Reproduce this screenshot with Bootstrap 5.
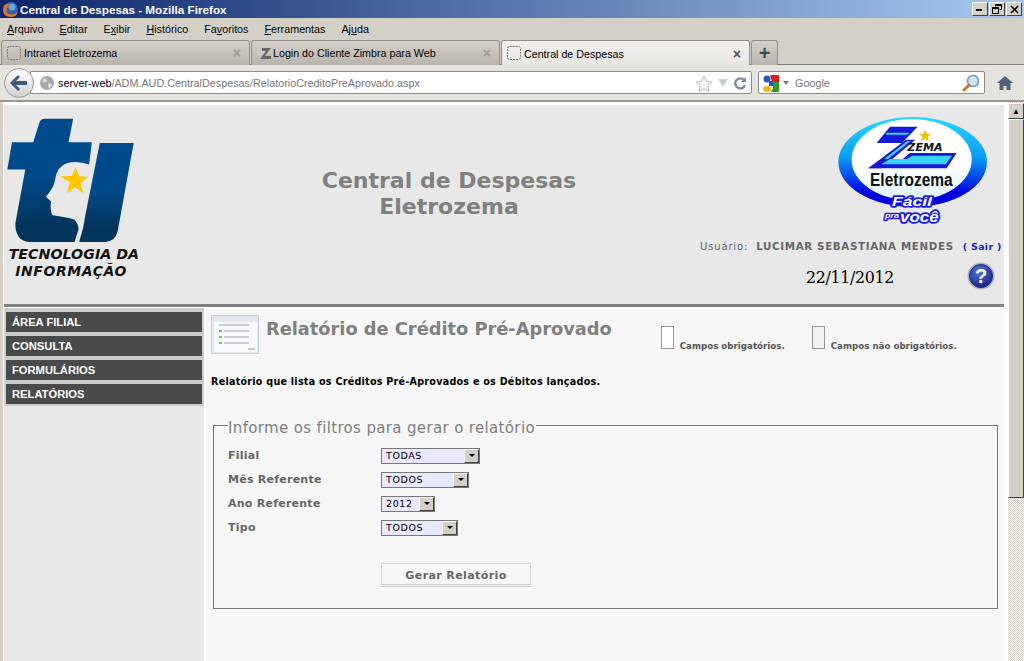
<!DOCTYPE html>
<html lang="pt-BR">

<head>
    <meta charset="UTF-8">
    <title>Central de Despesas - Mozilla Firefox</title>
    <link href="https://cdn.jsdelivr.net/npm/bootstrap@5.3.0/dist/css/bootstrap.min.css" rel="stylesheet">
    <style>
        html, body { height: 661px; overflow: hidden; }
        body { background: #d4d0c8; font-family: "Noto Sans", "Liberation Sans", sans-serif; font-size: 11px; color: #000; line-height: 1.2; }

        /* janela do navegador */
        .win-title { height: 18px; background: linear-gradient(90deg, #0a246a, #a6caf0); color: #fff; font: bold 11.7px "Liberation Sans", sans-serif; padding-left: 2px; }
        .win-btn { width: 16px; height: 14px; background: #d4d0c8; border: 1px solid; border-color: #fff #404040 #404040 #fff; }
        .win-btns { padding-right: 2px; gap: 1px; }
        .menu-bar { height: 22px; padding-left: 7px; gap: 16px; font: 10.75px "Liberation Sans", sans-serif; }
        .tab-row { height: 25px; padding-left: 1px; border-bottom: 1px solid #808080; gap: 1px; }
        .ff-tab { width: 249px; height: 25px; background: linear-gradient(#d4d0c8, #b9b5ad); border: 1px solid #8f8d88; border-bottom: 0; border-radius: 3px 3px 0 0; padding: 0 8px 0 5px; font: 10.7px "Liberation Sans", sans-serif; gap: 2px; }
        .ff-tab.on { background: linear-gradient(#f2f1ee, #e8e6e1); height: 26px; margin-bottom: -1px; }
        .tab-x { margin-left: auto; color: #9a968f; font-size: 14px; font-weight: bold; }
        .ff-tab.on .tab-x { color: #555; }
        .tab-plus { width: 27px; height: 25px; background: linear-gradient(#d4d0c8, #b9b5ad); border: 1px solid #8f8d88; border-bottom: 0; border-radius: 3px 3px 0 0; color: #3c4a5c; font: bold 20px "Liberation Sans", sans-serif; }
        .nav-row { height: 35px; background: #e6e4df; position: relative; padding: 6px 0 3px 30px; gap: 6px; }
        .back-btn { position: absolute; left: 4px; top: 3px; width: 30px; height: 30px; border-radius: 50%; background: linear-gradient(#fff, #cfd0d0); border: 1px solid #9a9a96; }
        .url-box { width: 722px; height: 23px; background: #fff; border: 1px solid #8f8d88; border-radius: 0 2px 2px 0; padding: 1px 0 0 9px; font: 10.8px "Liberation Sans", sans-serif; color: #777; }
        .url-box b { font-weight: normal; color: #000; }
        .search-box { width: 227px; height: 23px; background: #fff; border: 1px solid #8f8d88; border-radius: 2px; padding: 1px 4px 0; color: #777; font: 10.8px "Liberation Sans", sans-serif; }
        .home-ico { margin-left: 6px; }

        /* area da pagina */
        .page-frame { height: 561px; border-top: 2px solid #9a9894; padding-left: 3px; background: #d4d0c8; }
        .page-view { width: 1004px; height: 559px; background: #fff; flex: none; padding: 3px 3px 0 1px; }
        .scroll-col { width: 17px; flex: none; padding-top: 1px; border-left: 1px solid #fff; background: #d4d0c8 conic-gradient(#fff 25%, #d4d0c8 0 50%, #fff 0 75%, #d4d0c8 0) 0 0 / 2px 2px; }
        .scroll-arrow { height: 16px; background: #d4d0c8; border: 1px solid; border-color: #fff #404040 #404040 #fff; font-size: 8px; }
        .scroll-thumb { height: 379px; background: #d4d0c8; border: 1px solid; border-color: #fff #404040 #404040 #fff; }

        .top-head { height: 199px; background: #e8e8e8; position: relative; font-family: "DejaVu Sans", sans-serif; }
        .top-logo { width: 305px; padding: 11px 0 0 2px; }
        .top-title { width: 280px; margin-top: 63px; text-align: center; font-size: 22px; font-weight: bold; color: #808080; line-height: 26px; }
        .top-side { position: relative; margin-left: auto; width: 312px; }
        .zema-logo { display: block; margin: 12px 0 0 146px; }
        .user-line { position: absolute; left: 8px; top: 135px; white-space: nowrap; font-size: 10px; color: #666; letter-spacing: .85px; }
        .user-line b { margin-left: 4px; font-size: 10.3px; letter-spacing: .65px; }
        .user-line span { color: #2222bb; font-weight: bold; margin-left: 5px; font-size: 9.5px; letter-spacing: .3px; }
        .date-line { position: absolute; left: 114px; top: 163px; font: 15.800px "DejaVu Serif", serif; letter-spacing: -.3px; }
        .help-ico { position: absolute; left: 275px; top: 157px; }
        .head-sep { height: 3px; background: #808080; margin-bottom: 1px; }

        .page-body { height: 353px; }
        .side-col { width: 200px; flex: none; background: #e8e8e8; }
        .side-menu { background: #ccc; padding: 4px 2px 2px; gap: 4px; }
        .side-item { height: 20px; background: #4a4a4a; color: #fff; font: bold 11.2px "Liberation Sans", sans-serif; padding-left: 6px; }
        .main-col { flex: 1; background: #f7f7f7; margin-left: 2px; font-family: "DejaVu Sans", sans-serif; padding: 7px 6px 0 5px; }
        .rel-icon { width: 48px; height: 39px; flex: none; }
        .rel-title { font-size: 17.800px; font-weight: bold; color: #808080; margin-left: 7px; margin-top: 3px; white-space: nowrap; }
        .legend-a { margin: 11px 0 0 49px; }
        .legend-b { margin: 11px 0 0 27px; }
        .legend-box { width: 13px; height: 23px; border: 1px solid #999; background: #fff; flex: none; }
        .legend-b .legend-box { background: #f2f2f2; }
        .legend-txt { font-size: 8.700px; font-weight: bold; color: #555; margin: 0 0 -2px 6px; align-self: flex-end; white-space: nowrap; }
        .rel-desc { font-size: 9.6px; font-weight: bold; margin: 22px 0 0 0; letter-spacing: .25px; }
        .filter-set { border: 1px solid #777; margin: 27px 0 0 2px; padding: 7px 14px 0; width: 785px; height: 194px; }
        .filter-set legend { float: none; width: auto; font-size: 15px; color: #808080; margin: 0; padding: 5px 1px 0 0; line-height: 17px; letter-spacing: .35px; }
        .filter-row { height: 24px; font-size: 11px; font-weight: bold; color: #666; letter-spacing: .25px; }
        .filter-row label { width: 153px; flex: none; }
        .fake-sel { height: 16px; background: #e8e8ff; border: 1px solid; border-color: #808080 #d4d0c8 #d4d0c8 #808080; outline: 1px solid #777; outline-offset: -1px; font-size: 9.5px; font-weight: normal; color: #000; padding-left: 4px; letter-spacing: .6px; }
        .fake-sel i { margin-left: auto; width: 15px; height: 14px; background: #d4d0c8; border: 1px solid; border-color: #fff #404040 #404040 #fff; display: flex; align-items: center; justify-content: center; }
        .fake-sel i::after { content: ""; border: 3px solid transparent; border-top: 3px solid #000; border-bottom: 0; }
        .gerar-btn { width: 150px; height: 24px; margin: 23px 0 0 153px; background: #f7f7f7; border: 1px solid #d8d8d8; border-bottom: 3px double #ccc; color: #666; font-size: 11px; font-weight: bold; letter-spacing: .4px; border-radius: 0; padding: 4px 0 0; }
    </style>
</head>

<body>
    <div class="win-title d-flex align-items-center">
        <svg width="17" height="17" viewBox="0 0 17 17" style="margin-right:1px"><circle cx="9" cy="8" r="7" fill="#2f63ad"/><circle cx="10" cy="6" r="3.500" fill="#6fa4dc"/><path d="M3 3Q1 6 1 9q0 7 8 7 6 0 7-6-2 4-7 3.500Q4 13 4.500 8 5 5 8 3 5 2 4 4z" fill="#e8761c"/></svg>
        <span>Central de Despesas - Mozilla Firefox</span>
        <div class="win-btns d-flex ms-auto">
            <div class="win-btn d-flex align-items-end justify-content-center pb-1"><svg width="8" height="2"><rect width="6" height="2"/></svg></div>
            <div class="win-btn d-flex align-items-center justify-content-center"><svg width="10" height="10" viewBox="0 0 10 10" fill="none" stroke="#000"><path d="M3.500 2.500V.5h6v5h-2M.5 3.500h6v6h-6zM.5 4.500h6M3.500 1.500h6"/></svg></div>
            <div class="win-btn d-flex align-items-center justify-content-center"><svg width="9" height="9" viewBox="0 0 9 9" stroke="#000" stroke-width="1.600"><path d="M1 1l7 7M8 1L1 8"/></svg></div>
        </div>
    </div>

    <div class="menu-bar d-flex align-items-center">
        <span><u>A</u>rquivo</span><span><u>E</u>ditar</span><span>E<u>x</u>ibir</span><span><u>H</u>istórico</span><span>Fa<u>v</u>oritos</span><span><u>F</u>erramentas</span><span>Aj<u>u</u>da</span>
    </div>

    <div class="tab-row d-flex align-items-start">
        <div class="ff-tab d-flex align-items-center">
            <svg width="15" height="15" viewBox="0 0 15 15" fill="none" stroke="#777" stroke-dasharray="2 1"><rect x=".5" y=".5" width="13" height="13" rx="2"/></svg>
            <span>Intranet Eletrozema</span><span class="tab-x">×</span>
        </div>
        <div class="ff-tab d-flex align-items-center">
            <svg width="15" height="13" viewBox="0 0 15 13"><path d="M0 2h6l2 2-2 4H0z" fill="#ccc"/><path d="M5 1h9L8 9h6v3H3l6-8H5z" fill="#666"/></svg>
            <span style="margin-left:-1px">Login do Cliente Zimbra para Web</span><span class="tab-x">×</span>
        </div>
        <div class="ff-tab on d-flex align-items-center">
            <svg width="15" height="15" viewBox="0 0 15 15" fill="none" stroke="#777" stroke-dasharray="2 1"><rect x=".5" y=".5" width="13" height="13" rx="2"/></svg>
            <span>Central de Despesas</span><span class="tab-x">×</span>
        </div>
        <div class="tab-plus d-flex align-items-center justify-content-center">+</div>
    </div>

    <div class="nav-row d-flex align-items-start">
        <div class="back-btn d-flex align-items-center justify-content-center">
            <svg width="18" height="16" viewBox="0 0 18 16"><path d="M8 0l2 2-4 4h11v4H6l4 4-2 2-8-8z" fill="#3f5a78"/></svg>
        </div>
        <div class="url-box d-flex align-items-center">
            <svg width="14" height="14" viewBox="0 0 14 14"><circle cx="7" cy="7" r="7" fill="#a8a8a8"/><path d="M3 3c2-1 3 0 4 1S5 7 3 6zM8 8c2-1 4 0 4 1s-2 3-3 3-1-3-1-4z" fill="#ddd"/></svg>
            <span style="margin-left:4px"><b>server-web</b>/ADM.AUD.CentralDespesas/RelatorioCreditoPreAprovado.aspx</span>
            <div class="ms-auto d-flex align-items-center gap-1 pe-1">
                <svg width="18" height="17" viewBox="0 0 18 17"><path d="M9 1l2.500 5.500 5.500.6-4 3.800 1.100 5.600L9 13.700 3.900 16.500 5 10.900 1 7.100l5.500-.6z" fill="#f8f8f8" stroke="#bbb"/></svg>
                <svg width="12" height="8" viewBox="0 0 12 8"><path d="M1 0h10L6 8z" fill="#c4ccd4"/></svg>
                <svg width="14" height="14" viewBox="0 0 14 14" fill="none" stroke="#7b8a99" stroke-width="2.400"><path d="M12 9a5 5 0 1 1-1-5"/><path d="M13 1v5H8z" fill="#7b8a99" stroke="none"/></svg>
            </div>
        </div>
        <div class="search-box d-flex align-items-center">
            <svg width="16" height="17" viewBox="0 0 16 17"><path d="M0 0h16v17H0z" fill="#fff"/><circle cx="4" cy="4" r="3.500" fill="#2a55c8"/><path d="M6 6h4v5H6z" fill="#2a55c8"/><path d="M7 0h9v7H9z" fill="#d8201a"/><path d="M10 7h6v10H8l2-4z" fill="#2d9a2d"/><ellipse cx="4" cy="14" rx="4" ry="3" fill="#f0b418"/></svg>
            <svg width="6" height="4" viewBox="0 0 6 4" class="ms-1"><path d="M0 0h6L3 4z" fill="#777"/></svg>
            <span style="margin-left:6px">Google</span>
            <svg width="18" height="18" viewBox="0 0 18 18" class="ms-auto"><circle cx="11" cy="7" r="5.500" fill="#cfe6f8" stroke="#6f9dc4" stroke-width="1.600"/><path d="M7 11l-5 5" stroke="#c47a2a" stroke-width="3" stroke-linecap="round"/></svg>
        </div>
        <svg width="16" height="16" viewBox="0 0 16 16" class="home-ico mt-1"><path d="M8 1L0 8h2.500v7h4v-4h3v4h4V8H16z" fill="#4f6478"/></svg>
    </div>

    <div class="page-frame d-flex">
        <div class="page-view">
            <div class="top-head d-flex">
                <div class="top-logo">
                    <svg width="133" height="167" viewBox="20 50 400 500">
                        <defs><linearGradient id="tiBlue" x1="0" y1="0" x2="0" y2="1"><stop offset=".45" stop-color="#004a8c"/><stop offset=".85" stop-color="#03355c"/></linearGradient></defs>
                        <path fill="url(#tiBlue)" d="M120 70Q124 57 136 57H222L208 128H278L270 195Q235 182 205 190Q172 200 168 240Q166 262 140 292L155 305Q152 335 160 347Q200 352 225 360Q238 372 238 390L226 428H90Q48 425 48 372L78 210H24L38 128H102Z"/>
                        <path fill="url(#tiBlue)" d="M302 130H404L356 395Q348 428 318 428H240L252 385Q258 350 262 330Z"/>
                        <path fill="#ffc800" d="M229 202l11 28 28 2-24 18 9 31-25-18-25 18 9-32-29-19 35-1z"/>
                        <text x="28" y="478" textLength="392" lengthAdjust="spacingAndGlyphs" font-family="DejaVu Sans, sans-serif" font-size="42" font-weight="bold" font-style="italic" fill="#111">TECNOLOGIA DA</text>
                        <text x="48" y="530" textLength="334" font-family="DejaVu Sans, sans-serif" font-size="42" font-weight="bold" font-style="italic" fill="#111">INFORMAÇÃO</text>
                    </svg>
                </div>
                <div class="top-title">Central de Despesas<br>Eletrozema</div>
                <div class="top-side">
                    <svg class="zema-logo" width="150" height="108" viewBox="114 50 450 324">
                        <defs>
                            <linearGradient id="zRing" x1="0" y1="0" x2="0" y2="1"><stop offset="0" stop-color="#2ad8ff"/><stop offset=".45" stop-color="#0a9cf4"/><stop offset=".85" stop-color="#0000e0"/></linearGradient>
                            <linearGradient id="zIn" x1="0" y1="0" x2="0" y2="1"><stop offset=".55" stop-color="#fff"/><stop offset="1" stop-color="#dff3fa"/></linearGradient>
                        </defs>
                        <ellipse cx="338" cy="185" rx="223" ry="135" fill="url(#zRing)"/>
                        <ellipse cx="335" cy="178" rx="180" ry="122" fill="url(#zIn)"/>
                        <path d="M270 79H353L306 128H230z" fill="#1818d8"/>
                        <path d="M262 97H328L322 103H256z" fill="#36d4f4"/>
                        <path d="M318 118H346L244 204H205z" fill="#1818d8"/>
                        <path d="M322 122H332L238 196H226z" fill="#36d4f4"/>
                        <path d="M330 158H470L440 204H205L245 176H308z" fill="#1818d8"/>
                        <path d="M270 176H320L336 166H456L446 180L438 192H244z" fill="#36d4f4"/>
                        <text x="322" y="151" font-family="DejaVu Sans, sans-serif" font-size="30" font-weight="bold" font-style="italic" textLength="106" lengthAdjust="spacingAndGlyphs" fill="#111">ZEMA</text>
                        <path fill="#f0c010" d="M375 88l5 12 13 1-10 8 4 13-12-7-12 7 4-13-10-8 13-1z"/>
                        <text x="210" y="256" font-family="Liberation Sans, sans-serif" font-size="54" font-weight="bold" textLength="248" lengthAdjust="spacingAndGlyphs" fill="#111">Eletrozema</text>
                        <text x="276" y="318" paint-order="stroke" stroke="#1a1ae0" stroke-width="10" stroke-linejoin="round" font-family="Liberation Sans, sans-serif" font-size="40" font-weight="bold" font-style="italic" textLength="120" lengthAdjust="spacingAndGlyphs" fill="#fff">Fácil</text>
                        <text x="255" y="352" paint-order="stroke" stroke="#1a1ae0" stroke-width="8" stroke-linejoin="round" font-family="Liberation Sans, sans-serif" font-size="22" font-weight="bold" font-style="italic" textLength="42" lengthAdjust="spacingAndGlyphs" fill="#fff">pra</text>
                        <text x="300" y="364" paint-order="stroke" stroke="#1a1ae0" stroke-width="10" stroke-linejoin="round" font-family="Liberation Sans, sans-serif" font-size="42" font-weight="bold" font-style="italic" textLength="116" lengthAdjust="spacingAndGlyphs" fill="#fff">você</text>
                    </svg>
                    <div class="user-line">Usuário: <b>LUCIMAR SEBASTIANA MENDES</b> <span>( Sair )</span></div>
                    <div class="date-line">22/11/2012</div>
                    <svg class="help-ico" width="28" height="28" viewBox="0 0 28 28">
                        <defs><radialGradient id="helpG" cx=".4" cy=".3" r=".8"><stop offset="0" stop-color="#5a78d8"/><stop offset="1" stop-color="#0c1c78"/></radialGradient></defs>
                        <circle cx="14" cy="14" r="13.500" fill="#b0b0b8"/>
                        <circle cx="14" cy="14" r="11.500" fill="url(#helpG)" stroke="#1a2a88"/>
                        <text x="14" y="21" text-anchor="middle" font-family="Liberation Sans, sans-serif" font-size="20" font-weight="bold" fill="#fff">?</text>
                    </svg>
                </div>
            </div>
            <div class="head-sep"></div>

            <div class="page-body d-flex">
                <div class="side-col">
                    <div class="side-menu d-flex flex-column">
                        <div class="side-item d-flex align-items-center">ÁREA FILIAL</div>
                        <div class="side-item d-flex align-items-center">CONSULTA</div>
                        <div class="side-item d-flex align-items-center">FORMULÁRIOS</div>
                        <div class="side-item d-flex align-items-center">RELATÓRIOS</div>
                    </div>
                </div>
                <div class="main-col">
                    <div class="d-flex align-items-start">
                        <svg class="rel-icon" viewBox="0 0 48 39">
                            <rect x=".5" y=".5" width="47" height="38" fill="#e3e7ee" stroke="#ccd0d8"/>
                            <rect x="3" y="7" width="43" height="30" fill="#f8f9fb"/>
                            <path d="M8 10h30M13 16h25M13 22h25M13 28h25" stroke="#a0a0b8" stroke-width="1.200"/>
                            <path d="M8 16h3M8 22h3M8 28h3" stroke="#68c868" stroke-width="2"/>
                            <rect x="37" y="33" width="7" height="2" fill="#ccc"/>
                        </svg>
                        <div class="rel-title">Relatório de Crédito Pré-Aprovado</div>
                        <div class="legend-a d-flex"><div class="legend-box"></div><div class="legend-txt">Campos obrigatórios.</div></div>
                        <div class="legend-b d-flex"><div class="legend-box"></div><div class="legend-txt">Campos não obrigatórios.</div></div>
                    </div>
                    <div class="rel-desc">Relatório que lista os Créditos Pré-Aprovados e os Débitos lançados.</div>

                    <fieldset class="filter-set">
                        <legend>Informe os filtros para gerar o relatório</legend>
                        <div class="filter-row d-flex align-items-center"><label>Filial</label><div class="fake-sel d-flex align-items-center" style="width:99px">TODAS<i></i></div></div>
                        <div class="filter-row d-flex align-items-center"><label>Mês Referente</label><div class="fake-sel d-flex align-items-center" style="width:88px">TODOS<i></i></div></div>
                        <div class="filter-row d-flex align-items-center"><label>Ano Referente</label><div class="fake-sel d-flex align-items-center" style="width:54px">2012<i></i></div></div>
                        <div class="filter-row d-flex align-items-center"><label>Tipo</label><div class="fake-sel d-flex align-items-center" style="width:77px">TODOS<i></i></div></div>
                        <button type="button" class="btn gerar-btn">Gerar Relatório</button>
                    </fieldset>
                </div>
            </div>
        </div>
        <div class="scroll-col">
            <div class="scroll-arrow d-flex align-items-center justify-content-center">▲</div>
            <div class="scroll-thumb"></div>
        </div>
    </div>
</body>

</html>
